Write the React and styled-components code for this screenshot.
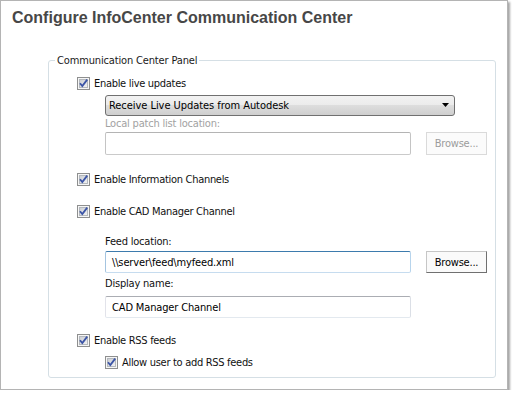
import React from "react";
import styled, { createGlobalStyle } from "styled-components";

const UI = `"DejaVu Sans Condensed", "Liberation Sans", Arial, sans-serif`;

const Global = createGlobalStyle`
  html, body { margin: 0; padding: 0; background: #fff; }
  body { font-family: ${UI}; }
  * { box-sizing: border-box; }
`;

const Window = styled.div`
  width: 508px;
  height: 390px;
  border: 1px solid #b4b4b4;
  background: #fff;
  box-shadow: 2px 2px 2px rgba(0, 0, 0, 0.35);
  display: flex;
  flex-direction: column;
`;

const Title = styled.h1`
  margin: 7px 0 0 0;
  padding-left: 11px;
  height: 20px;
  line-height: 20px;
  font-size: 16px;
  font-weight: bold;
  color: #474747;
  font-family: "Liberation Sans", Arial, sans-serif;
`;

const Group = styled.fieldset`
  margin: 26px 0 0 47px;
  width: 448px;
  padding: 0;
  border: 1px solid #d5dfe5;
  border-radius: 3px;
  min-width: 0;
`;

const Legend = styled.legend`
  margin-left: 6px;
  padding: 0 2px;
  font-size: 11px;
  line-height: 13px;
  letter-spacing: -0.15px;
  color: #1a1a1a;
`;

const Content = styled.div`
  display: flex;
  flex-direction: column;
  padding: 10px 0 8px 28px;
`;

const Row = styled.div`
  display: flex;
  align-items: center;
  margin-top: ${(p) => p.$mt || 0}px;
  margin-left: ${(p) => p.$indent || 0}px;
  gap: ${(p) => p.$gap || 0}px;
`;

const CheckLabel = styled.label`
  display: flex;
  align-items: center;
  height: 13px;
  gap: 4px;
  font-size: 11px;
  letter-spacing: -0.3px;
  color: #111;
  white-space: nowrap;
`;

const Caption = styled.div`
  height: 13px;
  line-height: 13px;
  font-size: 11px;
  letter-spacing: -0.2px;
  color: ${(p) => (p.$disabled ? "#a2a2a2" : "#111")};
  margin-top: ${(p) => p.$mt || 0}px;
  margin-left: 28px;
`;

const Select = styled.div`
  margin-top: ${(p) => p.$mt || 0}px;
  margin-left: 28px;
  width: 350px;
  height: 21px;
  border: 1px solid #707070;
  border-radius: 3px;
  background: linear-gradient(#f2f2f2 0%, #ebebeb 50%, #dddddd 50%, #cfcfcf 100%);
  display: flex;
  align-items: center;
  justify-content: space-between;
  padding: 0 4px 0 3px;
  font-size: 11px;
  letter-spacing: -0.05px;
  color: #000;
`;

const TextBox = styled.div`
  width: 306px;
  height: ${(p) => p.$h || 22}px;
  border: 1px solid ${(p) => (p.$disabled ? "#bcbcbc" : "#e2e6ec")};
  border-top-color: ${(p) => (p.$hover ? "#3d7bad" : p.$disabled ? "#b4b4b4" : "#abadb3")};
  border-left-color: ${(p) => (p.$hover ? "#a4c4e0" : p.$disabled ? "#c4c4c4" : "#e2e3ea")};
  border-right-color: ${(p) => (p.$hover ? "#b7d4ec" : p.$disabled ? "#c4c4c4" : "#dbdfe6")};
  border-bottom-color: ${(p) => (p.$hover ? "#c6dcef" : p.$disabled ? "#cacaca" : "#e3e9ef")};
  border-radius: 2px;
  background: #fff;
  display: flex;
  align-items: center;
  padding-left: 6px;
  font-size: 11px;
  letter-spacing: -0.15px;
  color: #000;
  white-space: nowrap;
`;

const Button = styled.div`
  width: 61px;
  height: ${(p) => p.$h || 22}px;
  display: flex;
  align-items: center;
  justify-content: center;
  font-size: 11px;
  letter-spacing: -0.2px;
  background: ${(p) => (p.$disabled ? "#fbfbfb" : "#fafafa")};
  border: 1px solid ${(p) => (p.$disabled ? "#dadada" : "#c6c6c6")};
  border-right-color: ${(p) => (p.$disabled ? "#dadada" : "#707070")};
  border-bottom-color: ${(p) => (p.$disabled ? "#dadada" : "#707070")};
  color: ${(p) => (p.$disabled ? "#9c9c9c" : "#000")};
`;

const Check = () => (
  <svg width="13" height="13" viewBox="0 0 13 13" style={{ flex: "none" }}>
    <defs>
      <linearGradient id="cbg" x1="0" y1="0" x2="1" y2="1">
        <stop offset="0" stopColor="#c9ccd1" />
        <stop offset="1" stopColor="#f4f4f5" />
      </linearGradient>
    </defs>
    <rect x="0.5" y="0.5" width="12" height="12" fill="#f6f6f6" stroke="#8e8f8f" />
    <rect x="2.5" y="2.5" width="8" height="8" fill="url(#cbg)" stroke="#b4b8bd" />
    <path d="M3 6.2 L5.3 9 L10.2 2.6" fill="none" stroke="#3b54a6" strokeWidth="1.8" strokeLinejoin="miter" />
  </svg>
);

const Arrow = () => (
  <svg width="8" height="5" viewBox="0 0 8 5">
    <path d="M0 0 H7 L3.5 4 Z" fill="#000" />
  </svg>
);

export default function App() {
  return (
    <>
      <Global />
      <Window>
        <Title>Configure InfoCenter Communication Center</Title>
        <Group>
          <Legend>Communication Center Panel</Legend>
          <Content>
            <Row>
              <CheckLabel>
                <Check />
                Enable live updates
              </CheckLabel>
            </Row>
            <Select $mt={5}>
              <span>Receive Live Updates from Autodesk</span>
              <Arrow />
            </Select>
            <Caption $mt={1} $disabled>
              Local patch list location:
            </Caption>
            <Row $mt={2} $indent={28} $gap={15}>
              <TextBox $disabled $h={23} />
              <Button $disabled $h={23}>
                Browse...
              </Button>
            </Row>
            <Row $mt={18}>
              <CheckLabel>
                <Check />
                Enable Information Channels
              </CheckLabel>
            </Row>
            <Row $mt={19}>
              <CheckLabel>
                <Check />
                Enable CAD Manager Channel
              </CheckLabel>
            </Row>
            <Caption $mt={17}>Feed location:</Caption>
            <Row $mt={3} $indent={28} $gap={15}>
              <TextBox $hover>\\server\feed\myfeed.xml</TextBox>
              <Button>Browse...</Button>
            </Row>
            <Caption $mt={4}>Display name:</Caption>
            <Row $mt={6} $indent={28}>
              <TextBox>CAD Manager Channel</TextBox>
            </Row>
            <Row $mt={16}>
              <CheckLabel>
                <Check />
                Enable RSS feeds
              </CheckLabel>
            </Row>
            <Row $mt={9} $indent={28}>
              <CheckLabel>
                <Check />
                Allow user to add RSS feeds
              </CheckLabel>
            </Row>
          </Content>
        </Group>
      </Window>
    </>
  );
}
